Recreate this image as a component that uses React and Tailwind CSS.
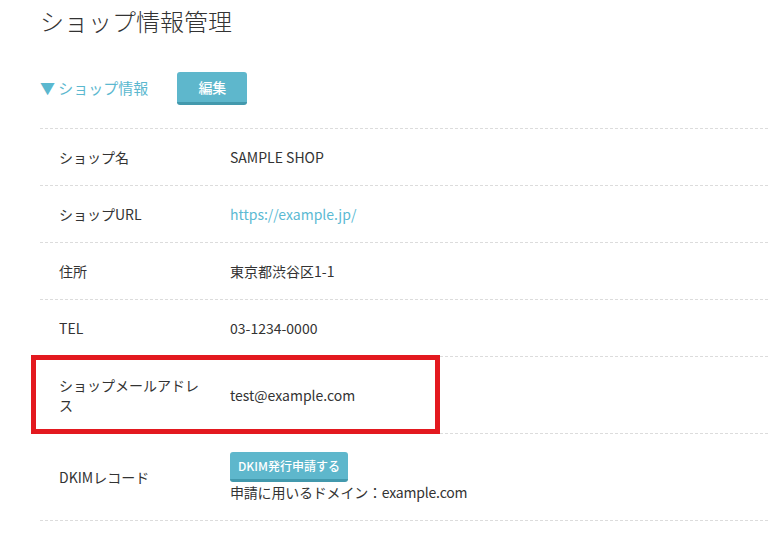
import React from "react";

const FONT = { fontFamily: '"Noto Sans CJK JP", "Noto Sans", sans-serif' };

function Row({ label, children }) {
  return (
    <div className="flex items-center border-b border-dashed border-[#dcdcdc] py-[18px]">
      <div className="w-[190px] shrink-0 pl-[19px] pr-[28px] leading-[20px]">{label}</div>
      <div className="flex-1 leading-[20px]">{children}</div>
    </div>
  );
}

export default function App() {
  return (
    <div className="relative w-[782px] h-[533px] overflow-hidden bg-white text-[#333] text-[14px]" style={FONT}>
      <div className="pl-[40px] pr-[15px]">
        <h1 className="pt-[5px] text-[24px] leading-[32px] font-light text-[#333]">ショップ情報管理</h1>
        <div className="mt-[35px] flex items-center h-[33px]">
          <span className="text-[15px] text-[#5bb8cf]">▼ ショップ情報</span>
          <button className="ml-[29px] w-[70px] h-[33px] rounded-[3px] bg-[#5eb7cc] border-b-[3px] border-[#4399ad] text-white text-[14px] font-medium">
            編集
          </button>
        </div>
        <div className="mt-[23px] w-[728px] border-t border-dashed border-[#dcdcdc]">
          <Row label="ショップ名">SAMPLE SHOP</Row>
          <Row label="ショップURL">
            <span className="text-[#5bbad3]">https://example.jp/</span>
          </Row>
          <Row label="住所">東京都渋谷区1-1</Row>
          <Row label="TEL">03-1234-0000</Row>
          <Row label="ショップメールアドレス">test@example.com</Row>
          <Row label="DKIMレコード">
            <div className="flex flex-col items-start">
              <button className="h-[30px] w-[118px] rounded-[3px] bg-[#5eb7cc] border-b-[3px] border-[#4399ad] text-white text-[12px] font-medium leading-[27px]">
                DKIM発行申請する
              </button>
              <div className="leading-[20px] tracking-[-0.2px]">申請に用いるドメイン：example.com</div>
            </div>
          </Row>
        </div>
      </div>
      <div className="absolute left-[31px] top-[355px] w-[409px] h-[79px] border-[5px] border-[#e3191f]" />
    </div>
  );
}
